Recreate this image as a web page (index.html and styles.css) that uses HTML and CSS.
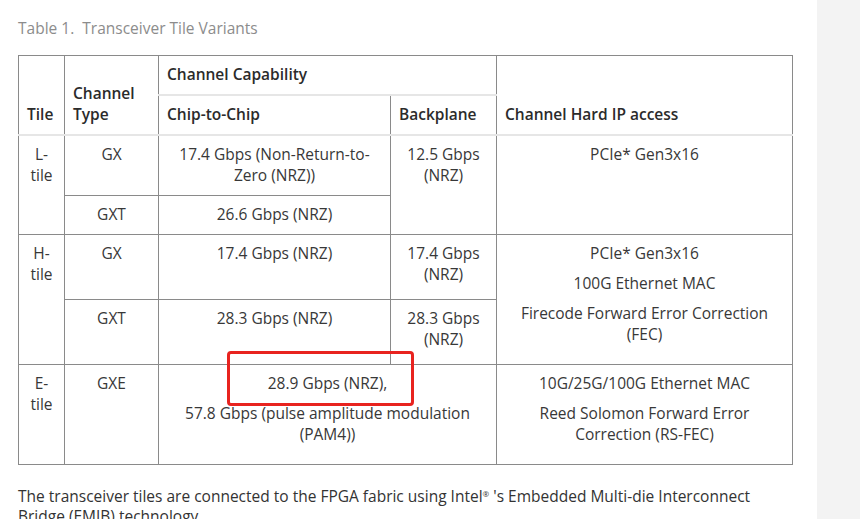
FILE: index.html
```html
<!DOCTYPE html>
<html>
<head>
<meta charset="utf-8">
<link rel="stylesheet" href="styles.css">
</head>
<body>
<div class="page">
  <main class="content">
    <div class="caption">Table 1.&nbsp; Transceiver Tile Variants</div>
    <div class="table-wrap">
      <table class="tbl">
        <colgroup>
          <col class="c-tile"><col class="c-type"><col class="c-chip"><col class="c-back"><col class="c-ip">
        </colgroup>
        <thead>
          <tr class="h1">
            <th rowspan="2" class="bottom">Tile</th>
            <th rowspan="2" class="bottom">Channel Type</th>
            <th colspan="2" class="cap">Channel Capability</th>
            <th rowspan="2" class="bottom">Channel Hard IP access</th>
          </tr>
          <tr class="h2">
            <th>Chip-to-Chip</th>
            <th>Backplane</th>
          </tr>
        </thead>
        <tbody>
          <tr class="r-lgx">
            <td rowspan="2">L-tile</td>
            <td>GX</td>
            <td>17.4 Gbps (Non-Return-to-Zero (NRZ))</td>
            <td rowspan="2">12.5 Gbps (NRZ)</td>
            <td rowspan="2">PCIe* Gen3x16</td>
          </tr>
          <tr class="r-lgxt">
            <td>GXT</td>
            <td>26.6 Gbps (NRZ)</td>
          </tr>
          <tr class="r-h">
            <td rowspan="2">H-tile</td>
            <td>GX</td>
            <td>17.4 Gbps (NRZ)</td>
            <td>17.4 Gbps (NRZ)</td>
            <td rowspan="2"><p>PCIe* Gen3x16</p><p>100G Ethernet MAC</p><p>Firecode Forward Error Correction (FEC)</p></td>
          </tr>
          <tr class="r-h">
            <td>GXT</td>
            <td>28.3 Gbps (NRZ)</td>
            <td>28.3 Gbps (NRZ)</td>
          </tr>
          <tr class="r-e">
            <td>E-tile</td>
            <td>GXE</td>
            <td colspan="2" class="rel"><p>28.9 Gbps (NRZ),</p><p>57.8 Gbps (pulse amplitude modulation (PAM4))</p><span class="mark"></span></td>
            <td><p>10G/25G/100G Ethernet MAC</p><p>Reed Solomon Forward Error Correction (RS-FEC)</p></td>
          </tr>
        </tbody>
      </table>
    </div>
    <p class="body-text">The transceiver tiles are connected to the FPGA fabric using Intel<sup>®</sup> 's Embedded Multi-die Interconnect Bridge (EMIB) technology.</p>
  </main>
  <aside class="side"></aside>
</div>
</body>
</html>
```
FILE: styles.css
```css
html, body {
  margin: 0;
  padding: 0;
  background: #fff;
  height: 100%;
  overflow: hidden;
}
body {
  font-family: "Open Sans", "Noto Sans", sans-serif;
  font-size: 15.5px;
  color: #383838;
}
.page {
  display: flex;
  height: 519px;
}
.content {
  width: 817px;
  flex: none;
  padding: 18px 0 0 18px;
  box-sizing: border-box;
}
.side {
  flex: 1;
  background: #f3f3f3;
}
.caption {
  color: #8c8c8c;
  font-size: 15.5px;
  line-height: 20px;
  margin-bottom: 17px;
}
.tbl {
  width: 774px;
  border-collapse: collapse;
  table-layout: fixed;
  border: 1px solid #8a8a8a;
}
.c-tile { width: 46px; }
.c-type { width: 94px; }
.c-chip { width: 232px; }
.c-back { width: 106px; }
.c-ip { width: 296px; }
.tbl th, .tbl td {
  border: 1px solid #8a8a8a;
  line-height: 21px;
}
.tbl th {
  text-align: left;
  font-weight: 600;
  color: #2b2b2b;
  padding: 8px 8px 9px;
  vertical-align: middle;
}
.tbl th.bottom { vertical-align: bottom; }
.tbl .h1 { height: 39px; }
.tbl .h2 { height: 40px; }
.tbl th.cap { border-bottom: 2px solid #e6e6e6; }
.tbl thead tr:last-child th,
.tbl th.bottom { border-bottom: 2px solid #e6e6e6; }
.tbl td {
  text-align: center;
  vertical-align: top;
  padding: 8px 8px 9px;
}
.tbl td p { margin: 0 0 9px; }
.tbl td p:last-child { margin-bottom: 10px; }
.r-h { height: 65px; }
.rel { position: relative; }
.mark {
  position: absolute;
  left: 68px;
  top: -14px;
  width: 181px;
  height: 49px;
  border: 3px solid #e8231f;
  border-radius: 4px;
}
.body-text {
  margin: 21px 0 0;
  line-height: 20px;
  color: #333;
  width: 760px;
}
.body-text sup {
  font-size: 8px;
  line-height: 0;
  vertical-align: 5px;
}
```
